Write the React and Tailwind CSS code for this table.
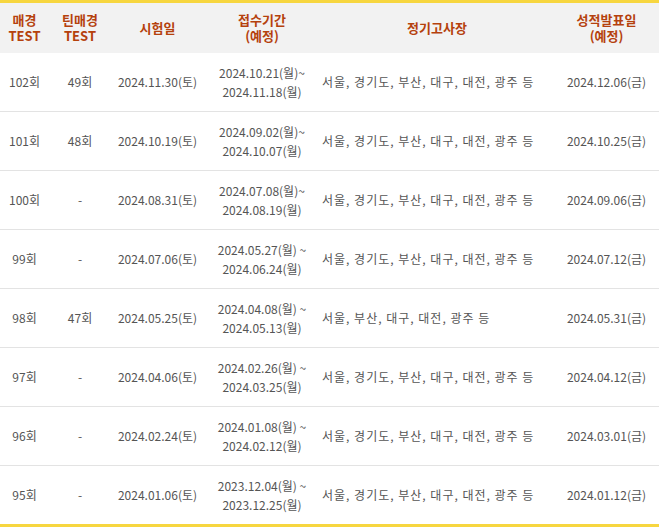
const rows = [
  ["102회", "49회", "2024.11.30(토)", "2024.10.21(월)~", "2024.11.18(월)", "서울, 경기도, 부산, 대구, 대전, 광주 등", "2024.12.06(금)"],
  ["101회", "48회", "2024.10.19(토)", "2024.09.02(월)~", "2024.10.07(월)", "서울, 경기도, 부산, 대구, 대전, 광주 등", "2024.10.25(금)"],
  ["100회", "-", "2024.08.31(토)", "2024.07.08(월)~", "2024.08.19(월)", "서울, 경기도, 부산, 대구, 대전, 광주 등", "2024.09.06(금)"],
  ["99회", "-", "2024.07.06(토)", "2024.05.27(월) ~", "2024.06.24(월)", "서울, 경기도, 부산, 대구, 대전, 광주 등", "2024.07.12(금)"],
  ["98회", "47회", "2024.05.25(토)", "2024.04.08(월) ~", "2024.05.13(월)", "서울, 부산, 대구, 대전, 광주 등", "2024.05.31(금)"],
  ["97회", "-", "2024.04.06(토)", "2024.02.26(월) ~", "2024.03.25(월)", "서울, 경기도, 부산, 대구, 대전, 광주 등", "2024.04.12(금)"],
  ["96회", "-", "2024.02.24(토)", "2024.01.08(월) ~", "2024.02.12(월)", "서울, 경기도, 부산, 대구, 대전, 광주 등", "2024.03.01(금)"],
  ["95회", "-", "2024.01.06(토)", "2023.12.04(월) ~", "2023.12.25(월)", "서울, 경기도, 부산, 대구, 대전, 광주 등", "2024.01.12(금)"],
];

export default function App() {
  return (
    <div className="w-[659px] bg-white font-['Noto_Sans_CJK_KR',sans-serif]">
      <table className="w-full table-fixed border-collapse border-t-[3px] border-b-[3px] border-[#f7d63f]">
        <colgroup>
          <col className="w-[49px]" />
          <col className="w-[62px]" />
          <col className="w-[93px]" />
          <col className="w-[116px]" />
          <col className="w-[234px]" />
          <col />
        </colgroup>
        <thead>
          <tr className="h-[51px] bg-[#f2f2f2] text-[13px] font-bold leading-[16px] text-[#b5410d]">
            <th className="p-0 text-center">매경<br />TEST</th>
            <th className="p-0 text-center">틴매경<br />TEST</th>
            <th className="p-0 text-center">시험일</th>
            <th className="p-0 text-center">접수기간<br />(예정)</th>
            <th className="p-0 text-center">정기고사장</th>
            <th className="p-0 text-center">성적발표일<br />(예정)</th>
          </tr>
        </thead>
        <tbody className="text-[12px] text-[#555]">
          {rows.map((r, i) => (
            <tr
              key={i}
              className={i < rows.length - 1 ? "h-[59px] border-b border-[#e3e3e3]" : "h-[60px]"}
            >
              <td className="p-0 text-center">{r[0]}</td>
              <td className="p-0 text-center">{r[1]}</td>
              <td className="p-0 text-center">{r[2]}</td>
              <td className="p-0 text-center leading-[19px]">
                {r[3]}
                <br />
                {r[4]}
              </td>
              <td className="p-0 pl-[2px] text-left tracking-[1px]">{r[5]}</td>
              <td className="p-0 text-center">{r[6]}</td>
            </tr>
          ))}
        </tbody>
      </table>
    </div>
  );
}
